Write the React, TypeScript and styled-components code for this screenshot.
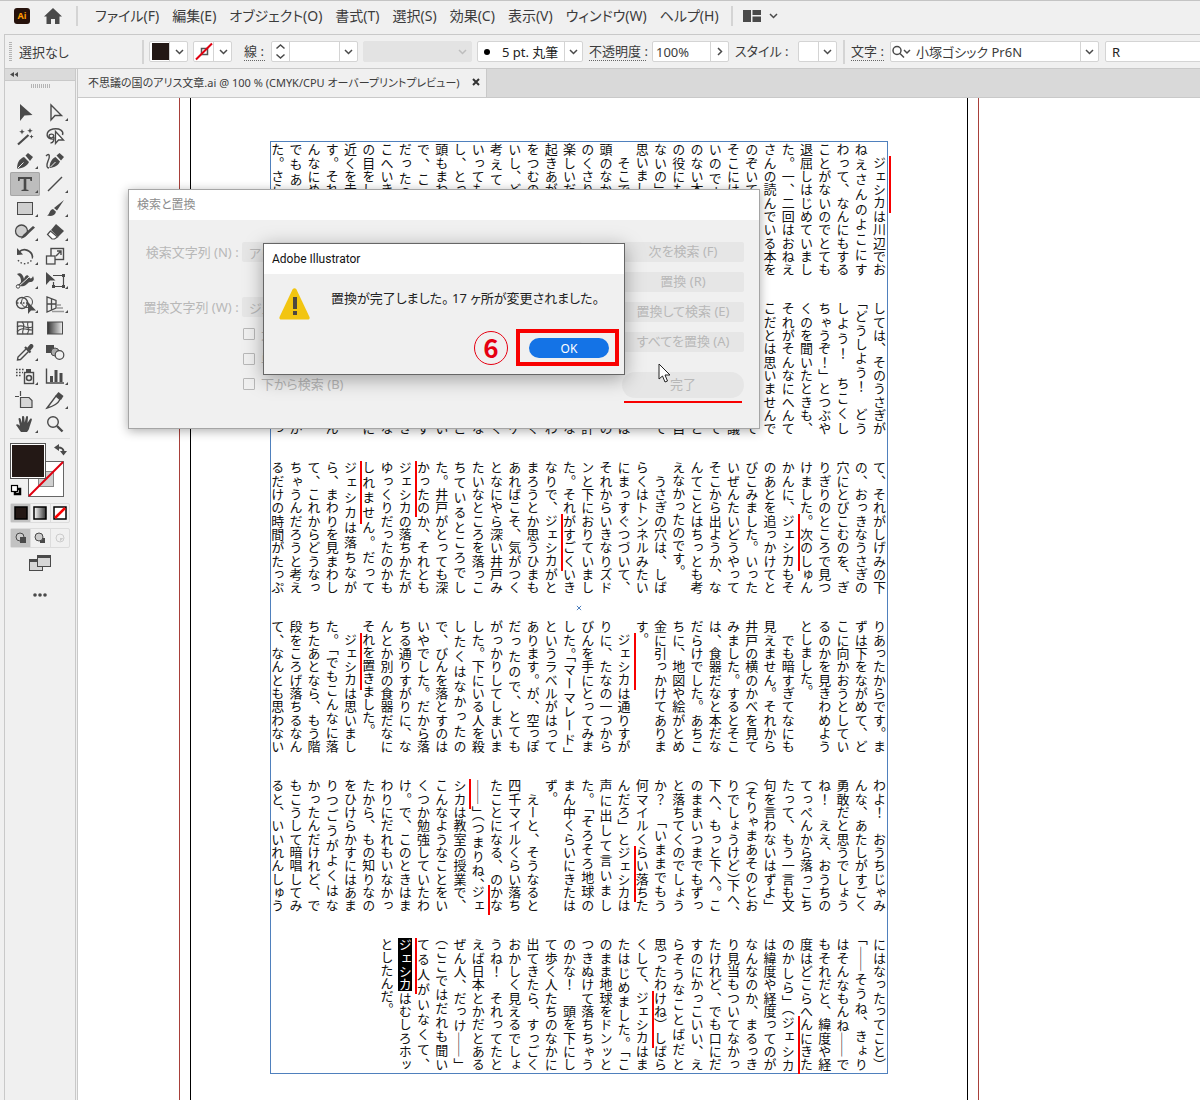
import React from "react";
import styled, { createGlobalStyle, css } from "styled-components";

const ink = "#4a4a4a";
const line = "#c9c9c9";
const chrome = "#f0f0f0";
const red = "#f80000";

const Global = createGlobalStyle`
  * { box-sizing: border-box; }
  body { margin: 0; background: ${chrome}; }
  body, button, input, select {
    font-family: "Noto Sans", "Noto Sans CJK JP", sans-serif;
    font-size: 13px;
    font-feature-settings: "palt";
    color: #3c3c3c;
  }
  button { border: 0; padding: 0; background: none; }
  svg { display: block; flex: none; }
`;

/* ---------- application frame ---------- */

const Window = styled.div`
  display: flex;
  flex-direction: column;
  height: 100vh;
  overflow: hidden;
  background: ${chrome};
  border-top: 1px solid #c4c4c4;
`;

const MenuBar = styled.nav`
  display: flex;
  align-items: center;
  flex: none;
  height: 33px;
  padding: 0 14px;
  padding-bottom: 3px;
`;

const AppBadge = styled.span`
  width: 16px;
  height: 16px;
  border-radius: 3px;
  background: #26120c;
  color: #ff9a00;
  font-size: 9px;
  font-weight: 700;
  line-height: 16px;
  text-align: center;
`;

const HomeButton = styled.button`
  margin: 0 14px;
`;

const Divider = styled.span<{ $h: number }>`
  flex: none;
  width: 2px;
  height: ${(p) => p.$h}px;
  background: #d4d4d4;
`;

const MenuList = styled.ul`
  display: flex;
  gap: 13px;
  margin: 0 12px 0 17px;
  padding: 0;
  list-style: none;
`;

const MenuItem = styled.button`
  font-size: 14px;
  line-height: 20px;
  white-space: nowrap;
`;

const WorkspaceButton = styled.button`
  display: flex;
  align-items: center;
  gap: 8px;
  margin-left: 10px;
`;

const Body = styled.div`
  display: flex;
  flex-direction: column;
  flex: 1;
  min-height: 0;
  margin-left: 4px;
  border: solid ${line};
  border-width: 1px 0 0 1px;
`;

const ControlBar = styled.div`
  display: flex;
  align-items: center;
  flex: none;
  height: 34px;
  padding-left: 4px;
  border-bottom: 1px solid ${line};
  overflow: hidden;
`;

const Grip = styled.span<{ $vertical?: boolean }>`
  flex: none;
  ${(p) =>
    p.$vertical
      ? css`
          width: 3px;
          height: 19px;
          background: repeating-linear-gradient(#b4b4b4 0 1px, transparent 1px 2px);
        `
      : css`
          width: 19px;
          height: 4px;
          background: repeating-linear-gradient(90deg, #b4b4b4 0 1px, transparent 1px 2px);
        `}
`;

const Status = styled.span`
  flex: none;
  width: 123px;
  margin-left: 7px;
  white-space: nowrap;
`;

const FieldLabel = styled.label<{ $plain?: boolean; $w: number; $ml?: number }>`
  flex: none;
  width: ${(p) => p.$w}px;
  margin-left: ${(p) => p.$ml ?? 6}px;
  line-height: 17px;
  white-space: nowrap;
  border-bottom: 1px ${(p) => (p.$plain ? "solid transparent" : "dotted #666")};
`;

const Combo = styled.span<{ $w: number; $ml?: number; $off?: boolean }>`
  display: grid;
  grid-template-columns: auto 1fr 18px;
  flex: none;
  align-items: center;
  width: ${(p) => p.$w}px;
  height: 21px;
  margin-left: ${(p) => p.$ml ?? 6}px;
  overflow: hidden;
  border: 1px solid ${(p) => (p.$off ? "#e3e3e3" : "#d4d4d4")};
  border-radius: 2px;
  background: ${(p) => (p.$off ? "#e3e3e3" : "#fff")};
`;

const fieldText = css`
  min-width: 0;
  width: 100%;
  height: 19px;
  padding: 0 3px;
  border: 0;
  outline: 0;
  background: transparent;
`;

const ComboInput = styled.input`
  ${fieldText}
  grid-column: 2;
  grid-row: 1;
`;

const ComboSelect = styled.select<{ $pad?: number }>`
  ${fieldText}
  padding-left: ${(p) => p.$pad ?? 3}px;
  grid-column: 1 / 4;
  grid-row: 1;
  appearance: none;
  color: #222;
`;

const ComboLead = styled.span<{ $line?: boolean }>`
  display: grid;
  place-items: center;
  grid-column: 1;
  grid-row: 1;
  height: 19px;
  pointer-events: none;
  border-right: ${(p) => (p.$line ? "1px solid #d4d4d4" : "0")};
`;

const ComboArrow = styled.span<{ $bare?: boolean }>`
  display: grid;
  place-items: center;
  grid-column: 3;
  grid-row: 1;
  height: 19px;
  pointer-events: none;
  border-left: 1px solid ${(p) => (p.$bare ? "transparent" : "#d4d4d4")};
`;

const SwatchButton = styled.button<{ $ml: number }>`
  display: flex;
  align-items: center;
  flex: none;
  width: 39px;
  height: 21px;
  margin-left: ${(p) => p.$ml}px;
  border: 1px solid #d4d4d4;
  border-radius: 2px;
  background: #fff;
  svg + svg { margin-left: 5px; }
`;

const Gap = styled.span`
  flex: none;
  width: 6px;
`;

const Work = styled.div`
  display: flex;
  flex: 1;
  min-height: 0;
`;

/* ---------- tool panel ---------- */

const ToolPanel = styled.aside`
  display: flex;
  flex-direction: column;
  align-items: center;
  flex: none;
  width: 73px;
  padding-right: 2px;
  border-right: 1px solid ${line};
  background: linear-gradient(${line}, ${line}) right 1px top / 1px 100% no-repeat;
`;

const PanelHead = styled.div`
  align-self: stretch;
  height: 12px;
  margin-bottom: 3px;
  padding: 3px 5px;
  background: #dadada;
  border-bottom: 1px solid ${line};
`;

const ToolGrid = styled.div`
  display: grid;
  grid-template-columns: repeat(2, 30px);
  grid-auto-rows: 24px;
  margin-top: 12px;
  padding-bottom: 2px;
  border-bottom: 1px solid #dcdcdc;
`;

const Tool = styled.button<{ $on?: boolean }>`
  border-radius: 2px;
  background: ${(p) => (p.$on ? "#bdbdbd" : "none")};
  box-shadow: ${(p) => (p.$on ? "inset 0 0 0 1px #a6a6a6" : "none")};
`;

const PaintButton = styled.button`
  margin-top: 4px;
`;

const Segments = styled.div<{ $top: number }>`
  display: grid;
  grid-template-columns: repeat(3, 1fr);
  width: 60px;
  height: 20px;
  margin-top: ${(p) => p.$top}px;
  border: 1px solid #dcdcdc;
  border-radius: 2px;
`;

const Segment = styled.button<{ $on?: boolean }>`
  display: grid;
  place-items: center;
  background: ${(p) => (p.$on ? "#c2c2c2" : "none")};
  & + & { border-left: 1px solid #dcdcdc; }
`;

const PanelButton = styled.button<{ $top: number }>`
  margin-top: ${(p) => p.$top}px;
`;

/* ---------- document ---------- */

const DocArea = styled.main`
  position: relative;
  display: flex;
  flex-direction: column;
  flex: 1;
  min-width: 0;
  overflow: hidden;
`;

const TabStrip = styled.div`
  display: flex;
  flex: none;
  height: 29px;
  background: #d9d9d9;
  border-bottom: 1px solid ${line};
`;

const Tab = styled.div`
  display: flex;
  align-items: center;
  justify-content: space-between;
  width: 409px;
  padding: 0 6px 2px 10px;
  background: ${chrome};
  border-right: 1px solid ${line};
  font-size: 11px;
  white-space: nowrap;
`;

const Canvas = styled.div`
  flex: 1;
  display: flex;
  min-height: 0;
  padding-left: 101px;
  background: #fff;
`;

const Bleed = styled.div`
  flex: none;
  width: 800px;
  padding: 0 10px;
  border-left: 1px solid #a8403a;
  border-right: 1px solid #a8403a;
`;

const Page = styled.div`
  height: 100%;
  padding: 43px 79px 0;
  border: solid #000;
  border-width: 0 1px;
`;

const TextFrame = styled.article`
  position: relative;
  display: flex;
  flex-direction: column;
  gap: 26px;
  padding: 1px 0 2px;
  border: 1px solid #4f80bd;
`;

const Band = styled.section`
  display: grid;
  writing-mode: vertical-rl;
  grid-template-rows: repeat(34, 1fr);
  height: 133px;
  margin: 0 -1px 0 -3px;
`;

const Line = styled.p<{ $last: boolean; $tight: boolean }>`
  height: 133px;
  margin: 0;
  align-self: center;
  font-family: "Noto Sans CJK JP", sans-serif;
  font-size: 13px;
  line-height: 18px;
  color: #111;
  white-space: nowrap;
  text-spacing-trim: trim-start;
  text-align: justify;
  text-align-last: ${(p) => (p.$last ? "start" : "justify")};
  font-feature-settings: ${(p) => (p.$tight ? '"vhal"' : "normal")};
`;

const Name = styled.span<{ $picked?: boolean }>`
  position: relative;
  color: ${(p) => (p.$picked ? "#fff" : "inherit")};
  background: ${(p) =>
    p.$picked ? "linear-gradient(#000, #000) center / 14px 100% no-repeat" : "none"};
  &::after {
    content: "";
    position: absolute;
    top: 0;
    bottom: -3px;
    right: -2px;
    width: 2px;
    background: ${red};
  }
`;

const CenterMark = styled.svg`
  position: absolute;
  top: 50%;
  left: 50%;
  transform: translate(-50%, -50%);
`;

/* ---------- dialogs ---------- */

const Dialog = styled.div<{ $x: number; $y: number; $w: number; $h: number; $front?: boolean }>`
  position: absolute;
  left: ${(p) => p.$x}px;
  top: ${(p) => p.$y}px;
  width: ${(p) => p.$w}px;
  height: ${(p) => p.$h}px;
  border: 1px solid ${(p) => (p.$front ? "#666" : "#a5a5a5")};
  background: ${chrome};
  box-shadow: ${(p) =>
    p.$front ? "0 4px 18px rgba(0,0,0,.34)" : "0 2px 10px rgba(0,0,0,.32)"};
`;

const DialogTitle = styled.h2<{ $front?: boolean }>`
  height: 30px;
  margin: 0;
  padding-left: 8px;
  background: #fff;
  color: ${(p) => (p.$front ? "#111" : "#8c8c8c")};
  font-family: Roboto, "Noto Sans CJK JP", sans-serif;
  font-size: 12px;
  font-weight: 400;
  line-height: 30px;
`;

const FindBody = styled.form`
  display: flex;
  justify-content: space-between;
  padding: 22px 15px 0 12px;
  color: #b8b8b8;
`;

const FindGroup = styled.div`
  display: grid;
  grid-template-columns: 101px 340px;
  row-gap: 35px;
`;

const FindLabel = styled.label`
  text-align: right;
  line-height: 20px;
  white-space: nowrap;
`;

const FindInput = styled.input`
  height: 20px;
  padding: 0 7px;
  border: 0;
  border-radius: 2px;
  background: #e6e6e6;
  color: #b8b8b8;
`;

const Options = styled.div`
  display: flex;
  flex-direction: column;
  gap: 5px;
  margin: 7px 0 0 102px;
`;

const Option = styled.label`
  display: flex;
  align-items: center;
  gap: 6px;
  height: 20px;
  line-height: 18px;
  input {
    appearance: none;
    width: 12px;
    height: 12px;
    margin: 0;
    border: 1px solid #b8b8b8;
    border-radius: 1px;
  }
`;

const FindButtons = styled.div`
  display: flex;
  flex-direction: column;
  flex: none;
  gap: 10px;
  width: 122px;
`;

const FindButton = styled.button`
  height: 20px;
  padding-bottom: 2px;
  border-radius: 2px;
  background: #e6e6e6;
  color: #b8b8b8;
  line-height: 18px;
`;

const DoneButton = styled(FindButton)`
  height: 26px;
  margin-top: 10px;
  border-radius: 13px;
`;

const DoneRule = styled.span`
  height: 2px;
  margin: -7px 2px 0;
  background: ${red};
`;

const AlertBody = styled.div`
  display: flex;
  align-items: flex-start;
  gap: 21px;
  padding: 14px 15px 0;
`;

const AlertText = styled.p`
  margin: 0;
  color: #222;
  line-height: 20px;
  white-space: nowrap;
`;

const AlertActions = styled.div`
  display: flex;
  justify-content: flex-end;
  align-items: center;
  gap: 8px;
  padding: 9px 5px 0;
`;

const Step = styled.span`
  width: 34px;
  height: 34px;
  border: 1px solid #e60012;
  border-radius: 50%;
  color: #e60012;
  font-family: "Noto Sans CJK JP", sans-serif;
  font-size: 26px;
  font-weight: 700;
  line-height: 30px;
  text-align: center;
`;

const Highlight = styled.span`
  display: flex;
  padding: 5px 6px 4px 9px;
  border: 4px solid ${red};
`;

const OkButton = styled.button`
  width: 80px;
  height: 20px;
  border-radius: 10px;
  background: #1473e6;
  color: #fff;
  font-size: 12px;
`;

const Pointer = styled.svg`
  position: absolute;
  left: 580px;
  top: 294px;
`;

/* ---------- data ---------- */

const menus = ["ファイル(F)", "編集(E)", "オブジェクト(O)", "書式(T)", "選択(S)", "効果(C)", "表示(V)", "ウィンドウ(W)", "ヘルプ(H)"];

/* Vertical setting needs the full-width forms of spaces and ASCII marks. */
const fullWidth = (s: string) =>
  s.replace(/[ !?()]/g, (c) =>
    c === " " ? "\u3000" : String.fromCharCode(c.charCodeAt(0) + 0xfee0),
  );

/* One string per column, right to left. "." closes a paragraph, [ ] marks a replaced name. */
const bands: string[] = [
  ` [ジェシカ]は川辺でお|ねえさんのよこにす|わって、なんにもする|ことがないのでとても|退屈しはじめていまし|た。一、二回はおねえ|さんの読んでいる本を|のぞいてみたけれど、|そこには絵も会話もな|いのです。「絵や会話|のない本なんて、なん|の役にもたたないじゃ|ないの」とジェシカは|思いました。.| そこでジェシカは、|頭のなかで、ひなぎく|のくさりをつくったら|楽しいだろうけれど、|起きあがってひなぎく|をつむのもめんどくさ|いし、どうしようかと|考えていました(と|いっても、昼間で暑い|し、とってもねむくて|頭もまわらなかったの|で、これもたいへん|だったのですが)。そ|こへいきなり、ピンク|の目をした白うさぎが|近くを走ってきたので|す。それだけなら、そ|んなにめずらしいこと|でもありませんでし|た。さらにジェシカと`,
  `しては、そのうさぎが|「どうしよう! どう|しよう! ちこくし|ちゃうぞ!」とつぶや|くのを聞いたときも、|それがそんなにへんて|こだとは思いませんで|した(あとから考えて|みたら、これも不思議|に思うべきことでして|けれどもこのときだと|それがほんとにごく自|然なことに思えたので|す)。.| でもそのうさぎには|チョッキとポケットの|中からふるい懐中時計|をとりだしてそれをな|がめ、またすぐにあわ|ててかけだしていく|のでしたが、そのポケ|ットから時計をだすく|らいうさぎはみょうな|ふしぎなことで、すご|くめずらしいとたいい|とジェシカは思います|そこで立ちあがるとき|もちになって、大きな|野原をよこぎるうちに|うさぎを追いました。|しばらくいくとたぶん|興味しんしんになり、|ジェシカはうさぎが|追って野原をよこぎっ`,
  `て、それがしげみの下|の、おっきなうさぎの|穴にとびこむのを、ぎ|りぎりのところで見つ|けました。次のしゅん|かんに、[ジェシカ]もそ|のあとを追っかけてと|びこみました。いった|いぜんたいどうやって|そこから出ようか、な|んてことはちっとも考|えなかったのです。.| うさぎの穴は、しば|らくはトンネルみたい|にまっすぐつづいて、|それからいきなりズド|ンと下におりていまし|た。それがすごくいき|なりで、[ジェシカ]がと|まろうとか思うひまも|あればこそ、気がつく|となにやら深い井戸み|たいなところを落っこ|ちているところでし|た。井戸がとっても深|かったのか、それとも|[ジェシカ]の落ちかたが|ゆっくりだったのかも|しれません。だって|[ジェシカ]は落ちなが|ら、まわりを見まわし|て、これからどうなっ|ちゃうんだろうと考え|るだけの時間がたっぷ`,
  `りあったからです。ま|ずは下をながめて、ど|こに向かおうとしてい|るのかを見きわめよう|としました。.| でも暗すぎてなにも|見えません。それから|井戸の横のかべを見て|みました。するとそこ|は、食器だなと本だな|だらけでした。あちこ|ちに、地図や絵がとめ|金に引っかけてありま|す。.| [ジェシカ]は通りすが|りに、たなの一つから|びんを手にとってみま|した。「マーマレード」|というラベルがはって|あります。が、空っぽ|だったので、とても|がっかりしてしまいま|した。下にいる人を殺|したくはなかったの|で、びんを落とすのは|いやでした。だから落|ちる通りすがりに、な|んとか別の食器だなに|それを置きました。.| [ジェシカ]は思いまし|た。「でもこんなに落|ちたあとなら、もう階|段をころげ落ちるなん|て、なんとも思わない`,
  `わよ! おうちじゃみ|んな、あたしがすごく|勇敢だと思うでしょう|ね! ええ、おうちの|てっぺんから落っこち|たって、もう一言も文|句を言わないはずよ」|(そりゃまあそのとお|りでしょうけど)下へ、|下へ、もっと下へ。こ|のままいつまでもずっ|と落ちてくのでしょう|か? 「いままでもう|何マイルくらい落ちた|んだろ」と[ジェシカ]は|声に出して言いまし|た。「そろそろ地球の|まん中くらいにきたは|ず。.| えーと、そうなると|四千マイルくらい落ち|たことになる、のかな|――」(つまりね、[ジェ]|[シカ]は教室の授業で、|こんなようなことをい|くつか勉強していたわ|け。で、このときはま|わりにだれもいなかっ|たから、もの知りなの|をひけらかすにはあま|りつごうがよくはな|かったんだけれど、で|もこうして暗唱してみ|ると、いいれんしゅう`,
  `にはなったってこと)|「――そうね、きょり|はそんなもんね――で|もそれだと、緯度や経|度はどこらへんにきた|のかしら」([ジェシカ]|は緯度や経度ってのが|なんなのか、まるっき|り見当もついてなかっ|たけれど、でも口にだ|すのにかっこいい、え|らそうなことばだと|思ったわけね)しばら|くして、[ジェシカ]はま|たはじめました。「こ|のまま地球をドンッと|つきぬけて落ちちゃう|のかな! 頭を下にし|て歩く人たちのなかに|出てきたら、すっごく|おかしく見えるでしょ|うね! それってたと|えば日本とかだとある|ぜん人、だっけ――」|(ここではだれも聞い|てる人がいなくて、|[*ジェシカ]はむしろホッ|としたんだ。.`,
];

const corner = <path d="M28 18v3h-3z" fill={ink} />;
const S = { fill: "none", stroke: ink, strokeWidth: 1.4 } as const;

const tools: { name: string; art: React.ReactNode; more?: boolean; on?: boolean }[] = [
  { name: "選択", art: <path d="M10 4v17l4.500-5.500 8-.5z" fill={ink} /> },
  { name: "ダイレクト選択", more: true, art: <path d="M11 5v15l4-4.500h6.500z" {...S} /> },
  { name: "自動選択", art: <><path d="M8 20.500 18.500 11" {...S} strokeWidth="2.200" /><path d="M12 5l.8 2 2 .8-2 .8-.8 2-.8-2-2-.8 2-.8zM20 4l.8 2 2 .8-2 .8-.8 2-.8-2-2-.8 2-.8zM21.500 10.500l.6 1.500 1.500.6-1.500.6-.6 1.500-.6-1.500-1.500-.6 1.500-.6z" fill={ink} /></> },
  { name: "なげなわ", art: <><path d="M14 15c-9 1-9-8-1-10 7-1 11 2 9.500 6M14 12c-1-3-5-2-5 0s4 3 4.500 0m0 0c1.500 3 0 7-3 7" {...S} /><path d="M15.500 7.500v12l3-3.500h5z" fill="#fff" stroke={ink} strokeWidth="1.300" /></> },
  { name: "ペン", more: true, art: <><path d="M7 21c0-6 2-10 7-12l5 5c-2 4-6 6-12 7z" fill={ink} /><path d="M15.500 7.500 18 5l5 4-3 4z" fill={ink} /><path d="m7.500 20.500 6-6" stroke="#eee" strokeWidth="1" /></> },
  { name: "曲線", art: <><path d="M6 8c4-4 4 1 2 5-2 5-1 7 1 7" {...S} /><path d="M9.500 20c0-5 2-9 6-11l4.500 4.500c-2 4-5 6-10.500 6.500zM16.500 7.500 19.500 5l4.500 4-3 3.500z" fill={ink} /><path d="m10.500 19 5-5" stroke="#eee" /></> },
  { name: "文字", more: true, on: true, art: <path d="M8 5h14v4h-1.500L20 7h-3.700v10.500l2.200.5v1h-7v-1l2.200-.5V7H10l-.5 2H8z" fill={ink} /> },
  { name: "直線", more: true, art: <path d="M8 19 22 5" {...S} /> },
  { name: "長方形", more: true, art: <rect x="7.500" y="6.500" width="15" height="12" fill="#cfcfcf" stroke={ink} /> },
  { name: "ブラシ", more: true, art: <><path d="M24 4 17 14.500l-3-2.500z" fill={ink} /><path d="M13 13l3 2.800c-1 4-5 4.700-9 3.700 3-.5 2-6 6-6.500z" fill={ink} /></> },
  { name: "Shaper", more: true, art: <><circle cx="11.500" cy="11" r="6" fill="#cfcfcf" stroke={ink} strokeWidth="1.300" /><path d="M25 7.500 15 17l-4 2 2-4L23 6z" fill={ink} /></> },
  { name: "消しゴム", more: true, art: <><path d="m16 4 8 7-6 6-7-7z" fill={ink} /><path d="m10.500 11-3 3.500 4.500 4.500h2.500l3-2z" fill="#fff" stroke={ink} strokeWidth="1.200" /></> },
  { name: "回転", more: true, art: <><path d="M9 8c5-5 13-1 13.500 5" {...S} strokeWidth="1.700" /><path d="M7 4v7l6-.5z" fill={ink} /><path d="M22.500 13c-1 8-12 9-15 2" {...S} strokeDasharray="1.500 2" /></> },
  { name: "拡大・縮小", more: true, art: <><rect x="11" y="4.500" width="12.500" height="11" {...S} /><rect x="6.500" y="12" width="8.500" height="8" fill={chrome} stroke={ink} strokeWidth="1.300" /><path d="m16 12 4.500-4.500M17 7h4v4" {...S} /></> },
  { name: "線幅", more: true, art: <><path d="M7 6c4-2 6 1 7 5 1-4 4-5 5-2 1 2 3 2 4-1 2 4 0 6-3 6-2 0-3 3-6 4-4 1-6-1-8 0 2-2 5-2 5-5 0-4-2-5-4-7z" fill={ink} /><path d="M8 19 19 9" {...S} stroke="#eee" strokeWidth="1" /><circle cx="8" cy="18.500" r="1.700" fill="#fff" stroke={ink} /></> },
  { name: "自由変形", more: true, art: <><path d="M6 4v13l4-4.500h5.500z" fill={ink} /><path d="M13 7.500h10.500v11h-10V14" {...S} strokeWidth="1.200" /><path d="M22 6h3v3h-3zM22 17h3v3h-3zM12 17h3v3h-3z" fill={ink} /></> },
  { name: "シェイプ形成", more: true, art: <><circle cx="12" cy="11" r="5.500" {...S} /><circle cx="17" cy="10" r="5.500" {...S} strokeWidth="1" /><path d="M7 11h10" {...S} strokeDasharray="1.500 1.500" /><path d="M18 10v12l3-3.500h5z" fill={ink} /></> },
  { name: "遠近グリッド", more: true, art: <><path d="M7 5v15l9-4V8.500zM11.500 7v11M7 12h9" {...S} strokeWidth="1.300" /><path d="M17 13h4M17 16h6M12 19.500h12" stroke="#999" strokeWidth="1.300" /></> },
  { name: "メッシュ", art: <><rect x="7.500" y="6" width="15" height="12" {...S} /><path d="M7 11c6-4 9 3 15 0M7 16c5-6 10-2 15-2M12 6c5 4-1 8 1 12M18 6c-2 4 3 8-1 12" {...S} strokeWidth="1.100" /></> },
  { name: "グラデーション", art: <rect x="7.500" y="6" width="15" height="12" fill="url(#ramp)" stroke={ink} /> },
  { name: "スポイト", more: true, art: <><path d="m17 8 3-3.500c2-1.500 4.500 1 3 3L20 11z" fill={ink} /><path d="m15 7 5.500 5.500" stroke={ink} strokeWidth="2.200" /><path d="m16 9-8 8-.5 3 3-.5 8-8" {...S} /></> },
  { name: "ブレンド", art: <><rect x="6" y="5" width="8" height="8" fill={ink} /><circle cx="15" cy="12" r="4" fill="#aaa" stroke={ink} /><circle cx="19.500" cy="15" r="4.300" fill={chrome} stroke={ink} strokeWidth="1.200" /></> },
  { name: "シンボルスプレー", more: true, art: <><path d="M6 5.500h9M6 8.500h7M6 11.500h5" stroke={ink} strokeWidth="1.600" strokeDasharray="1.600 1.400" /><rect x="14.500" y="8.500" width="9" height="11" {...S} /><path d="M16 5h5v3h-5z" fill={ink} /><circle cx="19" cy="14" r="2.500" {...S} strokeWidth="1.600" /></> },
  { name: "棒グラフ", more: true, art: <><path d="M6.500 4.500v14.500h17.500" {...S} /><path d="M10 12h3v6h-3zM14.500 6h3v12h-3zM19.500 9h3v9h-3z" fill={ink} /></> },
  { name: "アートボード", art: <><path d="M10.500 3v5M5 8.500h4" {...S} strokeWidth="1.200" /><path d="M10.500 9.500h8.500l3 3V19.500H10.500z" fill="#d6d6d6" stroke={ink} strokeWidth="1.200" /></> },
  { name: "スライス", more: true, art: <><path d="M7 20 16 8l4 3.500c-2 4-7 7-13 8.500z" {...S} /><path d="m15.500 7.500 3-3.500 5 4-2.500 4z" fill={ink} /></> },
  { name: "手のひら", more: true, art: <path d="M11 20c-2-2-3-5-5-7 1-1.500 3 0 4 1L8.500 7c0-1.500 1.800-1.500 2.200 0l1.300 4V5c0-1.500 2-1.500 2.200 0l.5 5.500L16 5c.4-1.500 2.200-1 2 .5L17.500 11 20 7c1-1 2.300-.2 1.800 1L19.500 15c-.5 2-1 3.500-2.500 5z" fill={ink} /> },
  { name: "ズーム", art: <><circle cx="13" cy="10" r="5.300" {...S} /><path d="m17 14 5.500 5.500" {...S} strokeWidth="2.400" /></> },
];

const Chevron = ({ c = ink }: { c?: string }) => (
  <svg width="9" height="6" viewBox="0 0 9 6" aria-hidden="true">
    <path d="M1 1l3.500 3.500L8 1" fill="none" stroke={c} strokeWidth="1.500" />
  </svg>
);

function renderLine(source: string) {
  return source.split(/(\[[^\]]+\])/).map((part, i) => {
    if (!part.startsWith("[")) return part;
    const picked = part[1] === "*";
    return (
      <Name key={i} $picked={picked}>
        {part.slice(picked ? 2 : 1, -1)}
      </Name>
    );
  });
}

function Story() {
  return (
    <TextFrame>
      {bands.map((band, b) => (
        <Band key={b}>
          {band.split("|").map((raw, i) => {
            const last = raw.endsWith(".");
            const text = fullWidth(last ? raw.slice(0, -1) : raw);
            return (
              <Line key={i} $last={last} $tight={text.replace(/[[\]*]/g, "").length > 10}>
                {renderLine(text)}
              </Line>
            );
          })}
        </Band>
      ))}
      <CenterMark width="5" height="5" viewBox="0 0 5 5" aria-hidden="true">
        <path d="M0 0l5 5M5 0L0 5" stroke="#4f80bd" />
      </CenterMark>
    </TextFrame>
  );
}

function Controls() {
  return (
    <ControlBar>
      <Grip $vertical />
      <Status>選択なし</Status>
      <Divider $h={24} />
      <SwatchButton $ml={5} aria-label="塗り">
        <svg width="20" height="19"><path d="M2 1h17v17H2z" fill="#231815" /><path d="M19.500 0v19" stroke="#d4d4d4" /></svg>
        <Chevron />
      </SwatchButton>
      <SwatchButton $ml={5} aria-label="線の色">
        <svg width="20" height="19"><path d="M7.500 6.500h6v6h-6z" fill="none" stroke="#555" strokeWidth="1.500" /><path d="M2 17.500 18 1.500" stroke="#e00010" strokeWidth="2" /><path d="M19.500 0v19" stroke="#d4d4d4" /></svg>
        <Chevron />
      </SwatchButton>
      <FieldLabel htmlFor="stroke" $w={21} $ml={12}>線 :</FieldLabel>
      <Combo $w={87}>
        <ComboLead $line>
          <svg width="17" height="17" viewBox="0 0 17 17"><path d="M4.500 5.500l4-3.500 4 3.500M4.500 11.500l4 3.500 4-3.500" fill="none" stroke={ink} strokeWidth="1.500" /></svg>
        </ComboLead>
        <ComboInput id="stroke" defaultValue="" />
        <ComboArrow><Chevron /></ComboArrow>
      </Combo>
      <Combo $w={109} $ml={5} $off>
        <ComboSelect disabled aria-label="可変線幅プロファイル" />
        <ComboArrow $bare><Chevron c="#bdbdbd" /></ComboArrow>
      </Combo>
      <Combo $w={106} $ml={5}>
        <ComboLead><svg width="18" height="8"><circle cx="9" cy="4" r="3" /></svg></ComboLead>
        <ComboSelect $pad={24} aria-label="ブラシ定義"><option>5 pt. 丸筆</option></ComboSelect>
        <ComboArrow><Chevron /></ComboArrow>
      </Combo>
      <FieldLabel htmlFor="opacity" $w={57}>不透明度 :</FieldLabel>
      <Combo $w={77}>
        <ComboInput id="opacity" defaultValue="100%" />
        <ComboArrow><svg width="6" height="9"><path d="M1 1l3.500 3.500L1 8" fill="none" stroke={ink} strokeWidth="1.500" /></svg></ComboArrow>
      </Combo>
      <FieldLabel htmlFor="style" $plain $w={57}>スタイル :</FieldLabel>
      <Combo $w={39}>
        <ComboSelect id="style" />
        <ComboArrow><Chevron /></ComboArrow>
      </Combo>
      <Gap />
      <Divider $h={24} />
      <FieldLabel htmlFor="font" $w={33}>文字 :</FieldLabel>
      <Combo $w={209}>
        <ComboLead>
          <svg width="22" height="16" viewBox="0 0 22 16"><circle cx="6" cy="6.500" r="4" fill="none" stroke={ink} strokeWidth="1.500" /><path d="M9 9.500l4 4M13 6l3 3 3-3" fill="none" stroke={ink} strokeWidth="1.500" /></svg>
        </ComboLead>
        <ComboInput id="font" defaultValue="小塚ゴシック Pr6N" />
        <ComboArrow><Chevron /></ComboArrow>
      </Combo>
      <Combo $w={120}>
        <ComboSelect $pad={6} aria-label="フォントスタイル"><option>R</option></ComboSelect>
        <ComboArrow><Chevron /></ComboArrow>
      </Combo>
    </ControlBar>
  );
}

function Tools() {
  return (
    <ToolPanel>
      <PanelHead>
        <svg width="8" height="5"><path d="M4 0v5L0 2.500zM8 0v5L4.500 2.500z" fill={ink} /></svg>
      </PanelHead>
      <Grip />
      <ToolGrid>
        {tools.map((t) => (
          <Tool key={t.name} $on={t.on} aria-label={t.name}>
            <svg width="30" height="24" viewBox="0 0 30 24">
              {t.name === "グラデーション" && (
                <defs><linearGradient id="ramp"><stop stopColor="#333" /><stop offset="1" stopColor="#eee" /></linearGradient></defs>
              )}
              {t.art}
              {t.more && corner}
            </svg>
          </Tool>
        ))}
      </ToolGrid>
      <PaintButton aria-label="塗りと線">
        <svg width="60" height="56" viewBox="0 0 60 56">
          <rect x="18.500" y="18.500" width="35" height="35" fill="#fff" stroke="#666" />
          <rect x="28.500" y="28.500" width="15" height="15" fill="#d0d0d0" stroke="#888" />
          <path d="M19 53 53 19" stroke="#e00010" strokeWidth="2" />
          <rect x=".5" y=".5" width="35" height="35" fill="#fff" stroke="#555" />
          <rect x="2" y="2" width="32" height="32" fill="#231815" />
          <path d="M49 1v7l-5-3.500zM50 8h7l-3.500 4.500z" fill={ink} />
          <path d="M48 4.500c4 0 5.500 1 5.500 4.500" fill="none" stroke={ink} strokeWidth="2" />
          <path d="M5 46h5v5H5z" fill="#fff" stroke="#000" strokeWidth="2.500" />
          <rect x="1.500" y="42.500" width="6" height="6" fill="#fff" stroke="#000" strokeWidth="1.200" />
        </svg>
      </PaintButton>
      <Segments $top={4}>
        <Segment $on aria-label="カラー"><svg width="14" height="14"><rect x="1" y="1" width="12" height="12" fill="#231815" stroke="#000" strokeWidth="1.500" /></svg></Segment>
        <Segment aria-label="グラデーション塗り"><svg width="14" height="14"><defs><linearGradient id="ramp2"><stop stopColor="#fff" /><stop offset="1" stopColor="#333" /></linearGradient></defs><rect x="1" y="1" width="12" height="12" fill="url(#ramp2)" stroke="#000" strokeWidth="1.500" /></svg></Segment>
        <Segment aria-label="なし"><svg width="14" height="14"><rect x="1" y="1" width="12" height="12" fill="#fff" stroke="#000" strokeWidth="1.500" /><path d="M2 12 12 2" stroke="#f00" strokeWidth="2.500" /></svg></Segment>
      </Segments>
      <Segments $top={5}>
        <Segment $on aria-label="標準描画"><svg width="12" height="12"><circle cx="5" cy="5" r="4" fill="#ccc" stroke={ink} /><path d="M5 5h6v6H5z" fill={ink} /></svg></Segment>
        <Segment aria-label="背面描画"><svg width="12" height="12"><path d="M6 6h5v5H6z" fill={ink} /><circle cx="5" cy="5" r="4" fill="#ccc" stroke={ink} /></svg></Segment>
        <Segment aria-label="内側描画"><svg width="12" height="12"><circle cx="6" cy="6" r="4" fill="none" stroke="#ccc" /><path d="M6 6h3.500L6 9.500z" fill="#ccc" /></svg></Segment>
      </Segments>
      <PanelButton $top={7} aria-label="スクリーンモード">
        <svg width="22" height="17"><rect x=".5" y="4.500" width="13" height="11" fill="#d6d6d6" stroke={ink} /><path d="M0 4h14v3H0z" fill={ink} /><rect x="8.500" y=".5" width="13" height="11" fill="#d6d6d6" stroke={ink} /><path d="M8 0h14v3H8z" fill={ink} /></svg>
      </PanelButton>
      <PanelButton $top={21} aria-label="ツールバーを編集">
        <svg width="14" height="4"><circle cx="2" cy="2" r="1.800" fill={ink} /><circle cx="7" cy="2" r="1.800" fill={ink} /><circle cx="12" cy="2" r="1.800" fill={ink} /></svg>
      </PanelButton>
    </ToolPanel>
  );
}

function FindDialog() {
  return (
    <Dialog $x={50} $y={120} $w={632} $h={240} role="dialog" aria-label="検索と置換">
      <DialogTitle>検索と置換</DialogTitle>
      <FindBody>
        <div>
          <FindGroup>
            <FindLabel htmlFor="find">検索文字列 (N) :&nbsp;</FindLabel>
            <FindInput id="find" defaultValue="アリス" disabled />
            <FindLabel htmlFor="swap">置換文字列 (W) :&nbsp;</FindLabel>
            <FindInput id="swap" defaultValue="ジェシカ" disabled />
          </FindGroup>
          <Options>
            <Option><input type="checkbox" disabled />大文字と小文字を区別 (C)</Option>
            <Option><input type="checkbox" disabled />単語単位 (O)</Option>
            <Option><input type="checkbox" disabled />下から検索 (B)</Option>
          </Options>
        </div>
        <FindButtons>
          <FindButton type="button">次を検索 (F)</FindButton>
          <FindButton type="button">置換 (R)</FindButton>
          <FindButton type="button">置換して検索 (E)</FindButton>
          <FindButton type="button">すべてを置換 (A)</FindButton>
          <DoneButton type="button">完了</DoneButton>
          <DoneRule />
        </FindButtons>
      </FindBody>
    </Dialog>
  );
}

function AlertDialog() {
  return (
    <Dialog $x={185} $y={174} $w={362} $h={132} $front role="alertdialog" aria-label="Adobe Illustrator">
      <DialogTitle $front>Adobe Illustrator</DialogTitle>
      <AlertBody>
        <svg width="31" height="32" viewBox="0 0 31 32" aria-hidden="true">
          <path d="M13.500 1.500q2-2.500 4 0L30.500 29q.5 2-1 2.500H1.500Q0 31 .5 29z" fill="#f2c511" />
          <path d="M14 9h4v12h-4zM14 23h4v4h-4z" fill="#4d4740" />
        </svg>
        <AlertText>置換が完了しました。 17 ヶ所が変更されました。</AlertText>
      </AlertBody>
      <AlertActions>
        <Step>6</Step>
        <Highlight><OkButton type="button">OK</OkButton></Highlight>
      </AlertActions>
    </Dialog>
  );
}

export default function App() {
  return (
    <>
      <Global />
      <Window>
        <MenuBar>
          <AppBadge>Ai</AppBadge>
          <HomeButton aria-label="ホーム">
            <svg width="18" height="16" viewBox="0 0 18 16"><path d="M9 0l9 8.500h-2.500V16h-4.500v-5H7v5H2.500V8.500H0z" fill={ink} /></svg>
          </HomeButton>
          <Divider $h={20} />
          <MenuList>
            {menus.map((m) => (<li key={m}><MenuItem>{m}</MenuItem></li>))}
          </MenuList>
          <Divider $h={20} />
          <WorkspaceButton aria-label="ワークスペース">
            <svg width="18" height="12"><path d="M0 0h8v12H0zM9.500 0H18v5H9.500zM9.500 6.500H18V12H9.500z" fill={ink} /></svg>
            <Chevron />
          </WorkspaceButton>
        </MenuBar>
        <Body>
          <Controls />
          <Work>
            <Tools />
            <DocArea>
              <TabStrip>
                <Tab>
                  <span>不思議の国のアリス文章.ai @ 100 % (CMYK/CPU オーバープリントプレビュー)</span>
                  <button aria-label="閉じる"><svg width="8" height="8"><path d="M1 1l6 6M7 1L1 7" stroke="#333" strokeWidth="2" /></svg></button>
                </Tab>
              </TabStrip>
              <Canvas>
                <Bleed><Page><Story /></Page></Bleed>
              </Canvas>
              <FindDialog />
              <AlertDialog />
              <Pointer width="13" height="20" viewBox="0 0 13 20" aria-hidden="true">
                <path d="M1 1v15l3.500-3 2.500 6 2.500-1-2.500-6H12z" fill="#fff" stroke="#222" />
              </Pointer>
            </DocArea>
          </Work>
        </Body>
      </Window>
    </>
  );
}
